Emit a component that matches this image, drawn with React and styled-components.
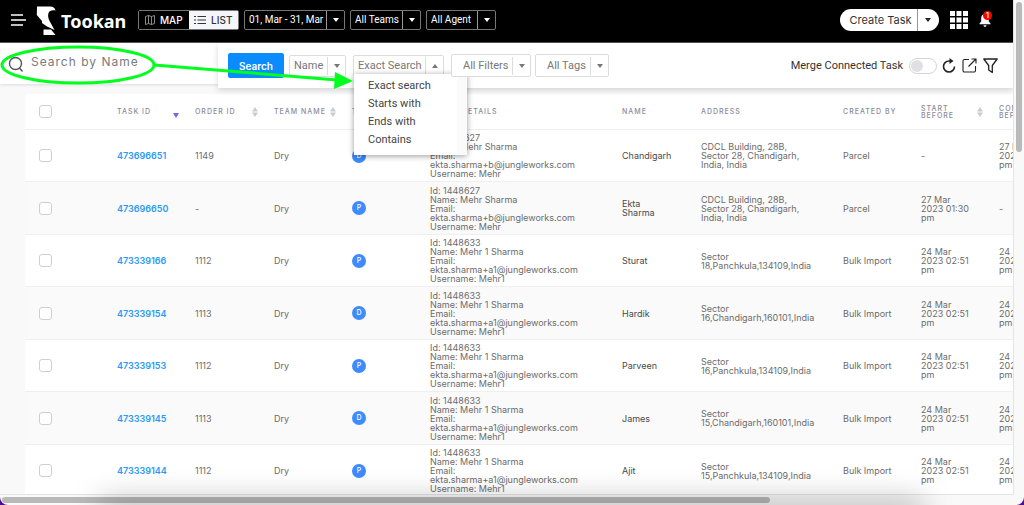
import React from 'react'
import styled, { createGlobalStyle } from 'styled-components'

const colors = {
  blue: '#0a8cff',
  link: '#2b9af3',
  badge: '#3d8bfd',
  text: '#6c6c6c',
  dark: '#333333',
  muted: '#8a8a9a',
  line: '#e4e4e4'
}

const GlobalStyle = createGlobalStyle`
  * { box-sizing: border-box; }
  body {
    margin: 0;
    background: #4b0e94;
    font-family: Inter, "Open Sans", sans-serif;
    color: ${colors.text};
  }
  button, input, select { font: inherit; color: inherit; }
`

const Page = styled.div`
  position: relative;
  display: grid;
  grid-template-columns: minmax(0, 1fr) 10px;
  grid-template-rows: minmax(0, 1fr) 10px;
  height: 100vh;
  overflow: hidden;
  background: #f9f9f9;
  border-radius: 0 0 8px 8px;
`

const Main = styled.main`
  display: flex;
  flex-direction: column;
  min-height: 0;
  overflow: hidden;
  border-right: 1px solid ${colors.line};
  border-bottom: 1px solid ${colors.line};
`

const Header = styled.header`
  display: flex;
  flex: none;
  align-items: center;
  height: 43px;
  padding: 0 22px 3px 11px;
  background: #000;
  border-bottom: 1px solid #555;
  color: #fff;
`

const IconButton = styled.button`
  position: relative;
  display: flex;
  padding: 0;
  border: 0;
  background: none;
  color: inherit;
  cursor: pointer;
`

const Brand = styled.a`
  display: flex;
  align-items: center;
  gap: 5px;
  width: 102px;
  padding-top: 2px;
  margin-left: 10px;
  color: #fff;
  font-family: "Noto Sans", sans-serif;
  font-size: 18px;
  font-weight: 700;
  line-height: 28px;
  text-decoration: none;
`

const ViewSwitch = styled.div`
  display: flex;
  width: 101px;
  height: 20px;
  border: 1px solid #777;
  border-radius: 2px;
`

const ViewButton = styled.button`
  display: flex;
  flex: 1;
  align-items: center;
  justify-content: center;
  gap: 5px;
  padding: 0;
  border: 0;
  background: ${props => props.$active ? '#f5f6fa' : '#000'};
  color: ${props => props.$active ? '#333' : '#fff'};
  font-size: 10px;
  font-weight: 500;
`

const HeaderFilters = styled.div`
  display: flex;
  flex: 1;
  gap: 5px;
  margin-left: 5px;
`

const Drop = styled.label`
  position: relative;
  display: flex;
  align-items: center;
  width: ${props => props.$width}px;
  height: ${props => props.$height || 22}px;
  border: 1px solid ${props => props.$dark ? '#777' : '#dcdcdc'};
  border-radius: 2px;
  background: ${props => props.$dark ? '#000' : '#fff'};
  color: ${props => props.$dark ? '#fff' : '#777'};
  font-family: Roboto, sans-serif;
  font-size: ${props => props.$dark ? 10 : 11}px;
`

const DropSelect = styled.select`
  flex: 1;
  min-width: 0;
  height: 100%;
  padding: 0 0 0 ${props => props.$inset || 4}px;
  border: 0;
  outline: 0;
  background: none;
  appearance: none;
`

const DropButton = styled.button`
  flex: 1;
  padding: 0 0 0 4px;
  border: 0;
  background: none;
  text-align: left;
  white-space: nowrap;
`

const Caret = styled.span`
  display: flex;
  flex: none;
  align-items: center;
  justify-content: center;
  width: 18px;
  height: 18px;
  border-left: 1px solid ${props => props.$dark ? '#999' : '#dcdcdc'};
  pointer-events: none;
  &::after {
    content: '';
    border: 3px solid transparent;
    border-top: ${props => props.$up ? '0' : '4px solid currentColor'};
    border-bottom: ${props => props.$up ? '4px solid currentColor' : '0'};
  }
`

const HeaderActions = styled.div`
  display: flex;
  align-items: center;
  gap: 11px;
`

const CreateTask = styled.div`
  display: flex;
  align-items: center;
  width: 99px;
  height: 22px;
  border-radius: 11px;
  background: #fff;
  color: #333;
  font-size: 11px;
`

const CreateButton = styled.button`
  flex: 1;
  padding: 0 0 0 4px;
  border: 0;
  background: none;
`

const CaretButton = styled.button`
  display: flex;
  align-items: center;
  justify-content: center;
  width: 22px;
  height: 22px;
  padding: 0 2px 0 0;
  border: 0;
  border-left: 1px solid #999;
  background: none;
  &::after {
    content: '';
    border: 3px solid transparent;
    border-top: 4px solid #222;
    border-bottom: 0;
  }
`

const Notice = styled.span`
  position: absolute;
  top: -2px;
  right: -1px;
  width: 9px;
  height: 9px;
  border-radius: 50%;
  background: #f00;
  font-size: 7px;
  font-weight: 600;
  line-height: 9px;
  text-align: center;
`

const Toolbar = styled.div`
  position: relative;
  z-index: 5;
  display: flex;
  flex: none;
  align-items: flex-start;
`

const SearchBox = styled.label`
  display: flex;
  align-items: center;
  gap: 7px;
  width: 218px;
  height: 41px;
  padding-left: 8px;
  background: #fff;
  box-shadow: 0 1px 3px rgba(0, 0, 0, 0.12);
`

const SearchInput = styled.input`
  width: 150px;
  padding: 0 0 4px;
  border: 0;
  outline: 0;
  background: none;
  font-size: 12px;
  letter-spacing: 1px;
  &::placeholder { color: #7a7a7a; opacity: 1; }
`

const Controls = styled.div`
  display: flex;
  flex: 1;
  align-items: center;
  height: 45px;
  padding: 0 15px 0 10px;
  background: #fff;
  box-shadow: 0 2px 6px rgba(0, 0, 0, 0.16);
`

const SearchButton = styled.button`
  width: 56px;
  height: 25px;
  padding: 0;
  margin-right: 5px;
  border: 0;
  border-radius: 2px;
  background: ${colors.blue};
  color: #fff;
  font-size: 10px;
  font-weight: 600;
`

const FilterGroup = styled.div`
  display: flex;
  flex: 1;
  align-items: center;
  gap: 7px;
`

const SideFilters = styled.div`
  display: flex;
  gap: 4px;
`

const Menu = styled.ul`
  position: absolute;
  top: 18px;
  left: 0;
  width: 113px;
  height: 81px;
  margin: 0;
  padding: 3px 0;
  border-right: 10px solid #fafafa;
  background: #fff;
  box-shadow: 0 1px 6px rgba(0, 0, 0, 0.4);
  color: #444;
  list-style: none;
`

const MenuItem = styled.li`
  padding-left: 14px;
  line-height: 18px;
`

const DropAnchor = styled.div`
  position: relative;
`

const Merge = styled.label`
  display: flex;
  align-items: center;
  gap: 6px;
  margin-right: 5px;
  color: ${colors.dark};
  font-family: Roboto, sans-serif;
  font-size: 11px;
`

const Toggle = styled.input`
  appearance: none;
  width: 28px;
  height: 16px;
  margin: 0;
  border: 1px solid #d4d4d4;
  border-radius: 8px;
  background: #fff;
  &::before {
    content: '';
    display: block;
    width: 12px;
    height: 12px;
    margin: 1px;
    border-radius: 50%;
    background: #dfe0e4;
  }
`

const Tools = styled.div`
  display: flex;
  align-items: center;
  gap: 6px;
  color: #222;
`

const TableArea = styled.div`
  flex: 1;
  min-height: 0;
  padding: 6px 0 0 25px;
  overflow: hidden;
`

const Table = styled.table`
  table-layout: fixed;
  width: 1040px;
  border-spacing: 0;
  border-radius: 3px 0 0 0;
  background: #fff;
  font-size: 9px;
  line-height: 9px;
`

const HeadCell = styled.th`
  height: 36px;
  padding: 0 2px 0 14px;
  border-bottom: 1px solid #eee;
  color: ${colors.muted};
  font-size: 7px;
  font-weight: 500;
  line-height: 7px;
  letter-spacing: 1px;
  text-align: left;
  white-space: ${props => props.$wrap ? 'normal' : 'nowrap'};
`

const HeadLabel = styled.span`
  display: flex;
  align-items: center;
  justify-content: space-between;
  svg { flex: none; }
`

const Row = styled.tr`
  height: 52px;
  &:nth-child(even) {
    height: 53px;
    background: #fafafa;
  }
`

const Cell = styled.td`
  padding: 0 4px 0 14px;
  border-bottom: 1px solid #efefef;
  color: ${props => props.$strong ? '#4a4a4a' : colors.text};
`

const TaskLink = styled.a`
  color: ${colors.link};
  font-weight: 600;
  text-decoration: none;
`

const Check = styled.input`
  appearance: none;
  display: block;
  width: 13px;
  height: 13px;
  margin: 0;
  border: 1px solid #cfcfcf;
  border-radius: 3px;
  background: #fff;
`

const TypeBadge = styled.span`
  display: block;
  width: 14px;
  height: 14px;
  border-radius: 50%;
  background: ${colors.badge};
  color: #fff;
  font-size: 7px;
  font-weight: 500;
  line-height: 14px;
  text-align: center;
`

const Track = styled.div`
  padding: 2px;
`

const Thumb = styled.div`
  width: ${props => props.$horizontal ? '76%' : '6px'};
  height: ${props => props.$horizontal ? '6px' : '150px'};
  border-radius: 3px;
  background: #b9b9b9;
`

const BottomShade = styled.div`
  position: absolute;
  top: 100%;
  left: 10%;
  right: 10%;
  height: 10px;
  box-shadow: 0 0 30px 2px rgba(0, 0, 0, 0.4);
  pointer-events: none;
`

const Markup = styled.svg`
  position: absolute;
  top: 40px;
  left: 0;
  z-index: 10;
  pointer-events: none;
`

const Sort = ({ active }) => active
  ? <svg width='6' height='12' viewBox='0 0 6 12'><path d='M0 7h6L3 12z' fill='#7367e0' /></svg>
  : <svg width='6' height='10' viewBox='0 0 6 10' fill='#cbcbcb'><path d='M0 4.4h6L3 0zM0 5.6h6L3 10z' /></svg>

const Logo = () => (
  <svg width='20' height='29' viewBox='0 0 20 29' fill='#fff'>
    <path d='M1 .5h13c3 0 5 1.5 5.5 4-3-.8-6-.3-7 2.5-.8 2.5-.2 5 .8 7.500L18.500 24 11 20.500 6 17v-2L.8 9z' />
    <path d='M7.500 23.500H15L19.500 29h-12z' />
  </svg>
)

const columns = [
  { width: 78 },
  { label: 'TASK ID', width: 78, sort: 'active' },
  { label: 'ORDER ID', width: 79, sort: 'both' },
  { label: 'TEAM NAME', width: 78, sort: 'both' },
  { label: 'TASK TYPE', width: 78 },
  { label: 'AGENT DETAILS', width: 192 },
  { label: 'NAME', width: 79 },
  { label: 'ADDRESS', width: 142 },
  { label: 'CREATED BY', width: 78 },
  { label: 'START BEFORE', width: 78, sort: 'both', wrap: true },
  { label: 'COMPLETE BEFORE', width: 80, wrap: true }
]

const mehr = ['1448627', 'Mehr Sharma', 'ekta.sharma+b@jungleworks.com', 'Mehr']
const mehr1 = ['1448633', 'Mehr 1 Sharma', 'ekta.sharma+a1@jungleworks.com', 'Mehr1']
const cdcl = ['CDCL Building, 28B,', 'Sector 28, Chandigarh,', 'India, India']
const late = ['24 Mar', '2023 02:51', 'pm']

const tasks = [
  { id: '473696651', order: '1149', type: 'D', user: mehr, name: ['Chandigarh'], address: cdcl, by: 'Parcel', start: ['-'], end: ['27 Mar', '2023 01:30', 'pm'] },
  { id: '473696650', order: '-', type: 'P', user: mehr, name: ['Ekta', 'Sharma'], address: cdcl, by: 'Parcel', start: ['27 Mar', '2023 01:30', 'pm'], end: ['-'] },
  { id: '473339166', order: '1112', type: 'P', user: mehr1, name: ['Sturat'], address: ['Sector', '18,Panchkula,134109,India'], by: 'Bulk Import', start: late, end: late },
  { id: '473339154', order: '1113', type: 'D', user: mehr1, name: ['Hardik'], address: ['Sector', '16,Chandigarh,160101,India'], by: 'Bulk Import', start: late, end: late },
  { id: '473339153', order: '1112', type: 'P', user: mehr1, name: ['Parveen'], address: ['Sector', '16,Panchkula,134109,India'], by: 'Bulk Import', start: late, end: late },
  { id: '473339145', order: '1113', type: 'D', user: mehr1, name: ['James'], address: ['Sector', '15,Chandigarh,160101,India'], by: 'Bulk Import', start: late, end: late },
  { id: '473339144', order: '1112', type: 'P', user: mehr1, name: ['Ajit'], address: ['Sector', '15,Panchkula,134109,India'], by: 'Bulk Import', start: late, end: late }
]

const Lines = ({ items }) => items.map((line, i) => (
  <React.Fragment key={i}>{i > 0 && <br />}{line}</React.Fragment>
))

const Dropdown = ({ text, width, height, dark, inset }) => (
  <Drop $width={width} $height={height} $dark={dark}>
    <DropSelect aria-label={text} $inset={inset}><option>{text}</option></DropSelect>
    <Caret $dark={dark} />
  </Drop>
)

const TopBar = () => (
  <Header>
    <IconButton aria-label='Menu'>
      <svg width='15' height='12' viewBox='0 0 15 12' stroke='#fff' strokeWidth='1.5'>
        <path d='M0 1h12M0 6h15M0 11h12' />
      </svg>
    </IconButton>
    <Brand href='#'><Logo />Tookan</Brand>
    <ViewSwitch>
      <ViewButton>
        <svg width='10' height='10' viewBox='0 0 10 10' fill='none' stroke='#aaa' strokeWidth='0.8'>
          <path d='M.5 1.5 3.5.5v8l-3 1zM3.5.5l3 1v8l-3-1M6.5 1.5l3-1v8l-3 1' />
        </svg>
        MAP
      </ViewButton>
      <ViewButton $active>
        <svg width='12' height='10' viewBox='0 0 12 10' stroke='#333' strokeWidth='1'>
          <path d='M0 1.5h2M3.5 1.5H12M0 5h2M3.5 5H12M0 8.5h2M3.5 8.5H12' />
        </svg>
        LIST
      </ViewButton>
    </ViewSwitch>
    <HeaderFilters>
      <Dropdown dark text='01, Mar - 31, Mar' width={101} height={20} />
      <Dropdown dark text='All Teams' width={71} height={20} />
      <Dropdown dark text='All Agent' width={70} height={20} />
    </HeaderFilters>
    <HeaderActions>
      <CreateTask>
        <CreateButton>Create Task</CreateButton>
        <CaretButton aria-label='More task types' />
      </CreateTask>
      <IconButton aria-label='Apps'>
        <svg width='18' height='18' viewBox='0 0 18 18' fill='#fff'>
          <path d='M0 0h5v5H0zM6.5 0h5v5h-5zM13 0h5v5h-5zM0 6.5h5v5H0zM6.5 6.5h5v5h-5zM13 6.5h5v5h-5zM0 13h5v5H0zM6.5 13h5v5h-5zM13 13h5v5h-5z' />
        </svg>
      </IconButton>
      <IconButton aria-label='Notifications'>
        <svg width='12' height='14' viewBox='0 0 12 14' fill='#fff'>
          <path d='M6 1C3.5 1 2.2 3 2.2 5v3.5L.5 10.5v.8h11v-.8L9.8 8.5V5C9.8 3 8.5 1 6 1zM4.5 12.2h3c0 2-3 2-3 0z' />
        </svg>
        <Notice>1</Notice>
      </IconButton>
    </HeaderActions>
  </Header>
)

const SearchBar = () => (
  <Toolbar>
    <SearchBox>
      <svg width='16' height='16' viewBox='0 0 16 16' fill='none' stroke='#555' strokeWidth='1.4'>
        <circle cx='7.5' cy='7.5' r='6' />
        <path d='m11.5 12 3 3.5' />
      </svg>
      <SearchInput placeholder='Search by Name' aria-label='Search by Name' />
    </SearchBox>
    <Controls>
      <SearchButton>Search</SearchButton>
      <FilterGroup>
        <Dropdown text='Name' width={57} />
        <DropAnchor>
          <Drop as='div' $width={91}>
            <DropButton aria-expanded='true'>Exact Search</DropButton>
            <Caret $up />
            <Menu>
              {['Exact search', 'Starts with', 'Ends with', 'Contains'].map(item => <MenuItem key={item}>{item}</MenuItem>)}
            </Menu>
          </Drop>
        </DropAnchor>
        <SideFilters>
          <Dropdown text='All Filters' width={80} height={23} inset={11} />
          <Dropdown text='All Tags' width={74} height={23} inset={11} />
        </SideFilters>
      </FilterGroup>
      <Merge>Merge Connected Task<Toggle type='checkbox' role='switch' /></Merge>
      <Tools>
        <IconButton aria-label='Refresh'>
          <svg width='14' height='16' viewBox='0 0 14 16' fill='none' stroke='currentColor' strokeWidth='1.6'>
            <path d='M12.5 8.5A5.5 5.5 0 1 1 7 3h2' />
            <path d='m7.5 0 4 3-4 3z' fill='currentColor' stroke='none' />
          </svg>
        </IconButton>
        <IconButton aria-label='Export'>
          <svg width='15' height='15' viewBox='0 0 15 15' fill='none' stroke='currentColor' strokeWidth='1.1'>
            <path d='M7 1.5H2.5A1.5 1.5 0 0 0 1 3v9.5A1.5 1.5 0 0 0 2.5 14H12a1.5 1.5 0 0 0 1.5-1.5V8M9.5 1H14v4.5M14 1 6.5 8.5' />
          </svg>
        </IconButton>
        <IconButton aria-label='Filter'>
          <svg width='15' height='16' viewBox='0 0 15 16' fill='none' stroke='currentColor' strokeWidth='1.3' strokeLinejoin='round'>
            <path d='M.8 1h13.4L9.3 7.5v7L5.7 12V7.5z' />
          </svg>
        </IconButton>
      </Tools>
    </Controls>
  </Toolbar>
)

const TaskTable = () => (
  <TableArea>
    <Table>
      <colgroup>{columns.map((c, i) => <col key={i} width={c.width} />)}</colgroup>
      <thead>
        <tr>
          {columns.map((c, i) => (
            <HeadCell key={i} $wrap={c.wrap}>
              {c.label
                ? <HeadLabel>{c.label}{c.sort && <Sort active={c.sort === 'active'} />}</HeadLabel>
                : <Check type='checkbox' aria-label='Select all' />}
            </HeadCell>
          ))}
        </tr>
      </thead>
      <tbody>
        {tasks.map(task => (
          <Row key={task.id}>
            <Cell><Check type='checkbox' aria-label={`Select ${task.id}`} /></Cell>
            <Cell><TaskLink href='#'>{task.id}</TaskLink></Cell>
            <Cell>{task.order}</Cell>
            <Cell>Dry</Cell>
            <Cell><TypeBadge>{task.type}</TypeBadge></Cell>
            <Cell>
              Id: {task.user[0]}<br />
              Name: {task.user[1]}<br />
              Email:<br />
              {task.user[2]}<br />
              Username: {task.user[3]}
            </Cell>
            <Cell $strong><Lines items={task.name} /></Cell>
            <Cell><Lines items={task.address} /></Cell>
            <Cell>{task.by}</Cell>
            <Cell><Lines items={task.start} /></Cell>
            <Cell><Lines items={task.end} /></Cell>
          </Row>
        ))}
      </tbody>
    </Table>
  </TableArea>
)

const App = () => (
  <>
    <GlobalStyle />
    <Page>
      <Main>
        <TopBar />
        <SearchBar />
        <TaskTable />
      </Main>
      <Track><Thumb /></Track>
      <Track><Thumb $horizontal /></Track>
      <BottomShade />
      <Markup width='360' height='55' viewBox='0 0 360 55' fill='none' stroke='#00ff1e'>
        <ellipse cx='78' cy='25' rx='76' ry='18' strokeWidth='3' />
        <path d='M154 25 337 40' strokeWidth='3' />
        <path d='m335 32 18 9-19 8z' fill='#00ff1e' stroke='none' />
      </Markup>
    </Page>
  </>
)

export default App
